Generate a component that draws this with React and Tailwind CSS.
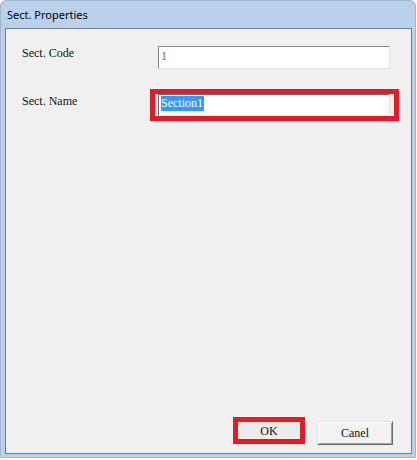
export default function App() {
  return (
    <div className="w-[417px] h-[460px] bg-white">
      <div className="w-[416px] h-[458px] flex flex-col bg-[#b9d1ea] border border-[#9fb6cf] rounded-t-[6px] pl-[4px] pr-[3px] pb-[3px]">
        {/* title bar */}
        <div className="h-[27px] shrink-0 pl-[2px] pt-[6px] font-['Noto_Sans',sans-serif] text-[11px] leading-[15px] text-black">
          Sect. Properties
        </div>

        {/* client area */}
        <div className="flex-1 flex flex-col bg-[#f0f0f0] border border-[#6f7e8e] pl-[16px] pt-[17px] font-['Liberation_Serif',serif] text-[12px] leading-[14px] text-[#111]">
          <div className="flex">
            <div className="w-[128px]">Sect. Code</div>
            <div className="pl-[8px]">
              <div className="w-[232px] h-[23px] bg-white border border-t-[#8a8a8a] border-l-[#8a8a8a] border-b-[#e3e3e3] border-r-[#e3e3e3] pl-[2px] pt-[2px] text-[#6a6a6a]">
                1
              </div>
            </div>
          </div>

          <div className="flex mt-[20px]">
            <div className="w-[128px] mt-[5px]">Sect. Name</div>
            <div className="w-[249px] h-[32px] border-[5px] border-[#e31b23] pl-[3px]">
              <div className="w-[232px] h-[22px] bg-white border border-t-[#6e6e6e] border-l-[#6e6e6e] border-b-[#e3e3e3] border-r-[#e3e3e3] pl-[2px] pt-[1px]">
                <span className="inline-block bg-[#3399ff] text-white leading-[15px] pr-[1px]">Section1</span>
              </div>
            </div>
          </div>

          {/* buttons */}
          <div className="mt-auto flex justify-end items-start gap-[12px] pr-[18px] pb-[8px]">
            <div className="w-[72px] h-[27px] border-[5px] border-[#e31b23] bg-[#ececec] flex items-center justify-center">
              OK
            </div>
            <button className="mt-[4px] w-[76px] h-[24px] flex items-center justify-center bg-[#f2f2f2] border border-t-[#e3e3e3] border-l-[#e3e3e3] border-r-[#696969] border-b-[#696969] shadow-[inset_1px_1px_0_#ffffff,inset_-1px_-1px_0_#a0a0a0] text-[#111]">
              Canel
            </button>
          </div>
        </div>
      </div>
    </div>
  );
}
